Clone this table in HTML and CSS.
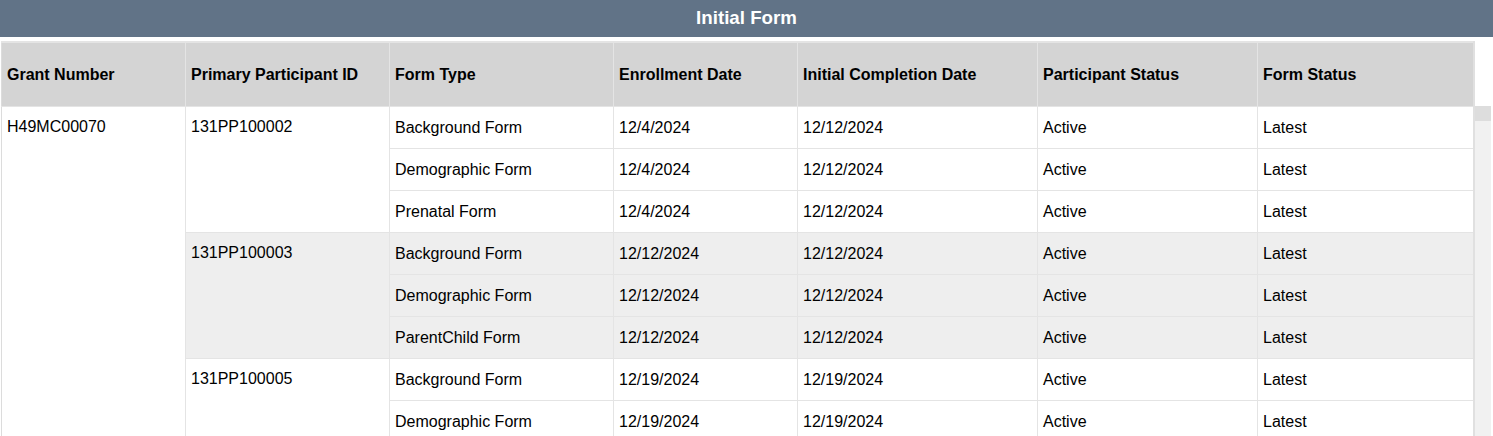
FILE: index.html
```html
<!DOCTYPE html>
<html>
<head>
<meta charset="utf-8">
<link rel="stylesheet" href="styles.css">
</head>
<body>
<div class="page">
  <h3 class="title-bar">Initial Form</h3>
  <div class="grid-wrap">
    <table class="grid">
      <colgroup>
        <col class="c1"><col class="c2"><col class="c3"><col class="c4"><col class="c5"><col class="c6"><col class="c7">
      </colgroup>
      <thead>
        <tr>
          <th>Grant Number</th>
          <th>Primary Participant ID</th>
          <th>Form Type</th>
          <th>Enrollment Date</th>
          <th>Initial Completion Date</th>
          <th>Participant Status</th>
          <th>Form Status</th>
        </tr>
      </thead>
      <tbody>
        <tr>
          <td class="span" rowspan="8">H49MC00070</td>
          <td class="span" rowspan="3">131PP100002</td>
          <td>Background Form</td><td>12/4/2024</td><td>12/12/2024</td><td>Active</td><td>Latest</td>
        </tr>
        <tr><td>Demographic Form</td><td>12/4/2024</td><td>12/12/2024</td><td>Active</td><td>Latest</td></tr>
        <tr><td>Prenatal Form</td><td>12/4/2024</td><td>12/12/2024</td><td>Active</td><td>Latest</td></tr>
        <tr class="alt">
          <td class="span" rowspan="3">131PP100003</td>
          <td>Background Form</td><td>12/12/2024</td><td>12/12/2024</td><td>Active</td><td>Latest</td>
        </tr>
        <tr class="alt"><td>Demographic Form</td><td>12/12/2024</td><td>12/12/2024</td><td>Active</td><td>Latest</td></tr>
        <tr class="alt"><td>ParentChild Form</td><td>12/12/2024</td><td>12/12/2024</td><td>Active</td><td>Latest</td></tr>
        <tr>
          <td class="span" rowspan="2">131PP100005</td>
          <td>Background Form</td><td>12/19/2024</td><td>12/19/2024</td><td>Active</td><td>Latest</td>
        </tr>
        <tr><td>Demographic Form</td><td>12/19/2024</td><td>12/19/2024</td><td>Active</td><td>Latest</td></tr>
      </tbody>
    </table>
    <div class="scrollbar">
      <div class="scroll-btn"></div>
    </div>
  </div>
</div>
</body>
</html>
```

FILE: styles.css
```css
html, body {
  margin: 0;
  padding: 0;
  background: #ffffff;
}

body {
  font-family: "Liberation Sans", Arial, sans-serif;
  color: #000000;
  height: 436px;
  overflow: hidden;
}

.page {
  display: flex;
  flex-direction: column;
}

.title-bar {
  margin: 0;
  height: 37px;
  line-height: 36px;
  background: #617387;
  color: #ffffff;
  font-size: 18.72px;
  font-weight: bold;
  text-align: center;
}

.grid-wrap {
  display: flex;
  align-items: flex-start;
  padding-top: 4px;
  padding-left: 1px;
}

.grid {
  border-collapse: collapse;
  table-layout: fixed;
  width: 1472px;
  font-size: 16px;
  flex: none;
}

.c1 { width: 184px; }
.c2 { width: 204px; }
.c3 { width: 224px; }
.c4 { width: 184px; }
.c5 { width: 240px; }
.c6 { width: 220px; }
.c7 { width: 216px; }

.grid th {
  background: #d4d4d4;
  border: 1px solid #e4e4e4;
  border-top: 2px solid #e4e4e4;
  height: 63px;
  padding: 0 5px;
  text-align: left;
  font-weight: bold;
  vertical-align: middle;
  white-space: nowrap;
}

.grid td {
  border: 1px solid #e4e4e4;
  height: 41px;
  padding: 0 5px;
  line-height: 18px;
  vertical-align: middle;
  white-space: nowrap;
}

.grid td.span {
  vertical-align: top;
  padding-top: 11px;
}

.grid th:first-child,
.grid td:first-child {
  border-left: 1px solid #dcdcdc;
}

.grid tr > :last-child {
  border-right: 2px solid #e0e0e0;
}

.grid tr.alt td {
  background: #eeeeee;
}

.scrollbar {
  flex: none;
  width: 16px;
  height: 400px;
  margin-top: 65px;
  background: #f1f1f1;
}

.scroll-btn {
  height: 15px;
  background: #dddddd;
}
```
